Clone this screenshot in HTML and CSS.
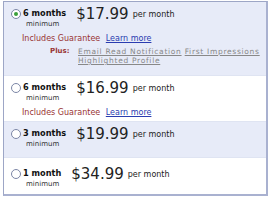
FILE: index.html
```html
<!DOCTYPE html>
<html lang="en">
<head>
  <meta charset="UTF-8" />
  <title>Plans</title>
  <link rel="stylesheet" href="styles.css">
</head>
<body>

<div class="plans">

  <!-- 6 months, selected -->
  <div class="plan shaded">
    <div class="plan-head">
      <span class="radio checked"></span>
      <div class="term"><b>6 months</b><span>minimum</span></div>
      <span class="price">$17.99</span>
      <span class="per">per month</span>
    </div>
    <div class="includes">Includes Guarantee <a href="#">Learn more</a></div>
    <div class="plus">
      <span class="plus-label">Plus:</span>
      <div class="extras">
        <a href="#">Email Read Notification</a> <a href="#">First Impressions</a><br>
        <a href="#">Highlighted Profile</a>
      </div>
    </div>
  </div>

  <div class="plan">
    <div class="plan-head">
      <span class="radio"></span>
      <div class="term"><b>6 months</b><span>minimum</span></div>
      <span class="price">$16.99</span>
      <span class="per">per month</span>
    </div>
    <div class="includes">Includes Guarantee <a href="#">Learn more</a></div>
  </div>

  <div class="plan shaded">
    <div class="plan-head">
      <span class="radio"></span>
      <div class="term"><b>3 months</b><span>minimum</span></div>
      <span class="price">$19.99</span>
      <span class="per">per month</span>
    </div>
  </div>

  <div class="plan">
    <div class="plan-head">
      <span class="radio"></span>
      <div class="term"><b>1 month</b><span>minimum</span></div>
      <span class="price">$34.99</span>
      <span class="per">per month</span>
    </div>
  </div>

</div>

</body>
</html>
```

FILE: styles.css
```css
body {
  margin: 0;
  font-family: "DejaVu Sans", Verdana, sans-serif;
  background: white;
  color: #222;
}

.plans {
  width: 262px;
  margin: 1px 0 0 3px;
  border: 1px solid #9da6c6;
  border-right: 2px solid #a9b1d0;
  border-bottom: 2px solid #a9b1d0;
}

.plan {
  padding: 5px 0 8px 7px;
  border-top: 1px solid #dfe4f2;
  background: white;
}

.plan:first-child {
  border-top: none;
  padding-bottom: 10px;
}

.plan:nth-child(2) {
  padding-bottom: 3px;
}

.plan:last-child {
  padding-top: 9px;
  padding-bottom: 5px;
}

.plan.shaded {
  background: #e7ebf8;
}

.plan-head {
  display: flex;
  align-items: flex-start;
  white-space: nowrap;
}

.radio {
  flex: none;
  width: 8px;
  height: 8px;
  margin-top: 2px;
  border: 1px solid #7c86a6;
  border-radius: 50%;
  background: white;
  position: relative;
}

.radio.checked::after {
  content: "";
  position: absolute;
  left: 2px;
  top: 2px;
  width: 4px;
  height: 4px;
  border-radius: 50%;
  background: #3aa03a;
}

.term {
  display: flex;
  flex-direction: column;
  margin-left: 2px;
}

.term b {
  font-size: 8.2px;
  line-height: 12px;
  color: #111;
}

.term span {
  font-size: 7px;
  line-height: 10px;
  padding-left: 3px;
  color: #333;
}

.price {
  font-size: 15px;
  line-height: 18px;
  margin-left: 10px;
  margin-top: -2px;
}

.per {
  font-size: 8px;
  line-height: 12px;
  margin-left: 4px;
  margin-top: 2px;
}

.includes {
  font-size: 8px;
  line-height: 10px;
  color: #993333;
  margin-top: 5px;
  margin-left: 11px;
  white-space: nowrap;
}

.includes a {
  color: #2a3cb0;
  margin-left: 3px;
}

.plus {
  display: flex;
  margin-top: 3px;
  margin-left: 39px;
  line-height: 9px;
  white-space: nowrap;
}

.plus-label {
  color: #993333;
  font-weight: bold;
  font-size: 7px;
  width: 28px;
}

.extras {
  font-size: 7.5px;
  letter-spacing: 0.7px;
}

.extras a {
  color: #888;
}
```
